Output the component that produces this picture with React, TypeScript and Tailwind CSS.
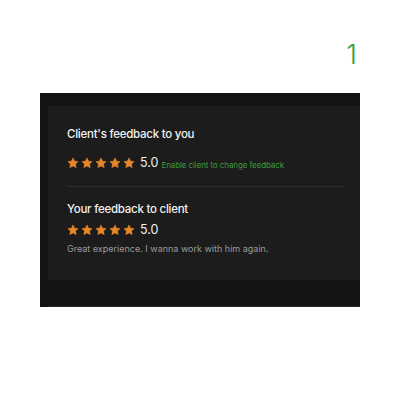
import React from 'react';

const Star = () => (
  <svg viewBox="0 0 24 24" className="w-[12px] h-[12px]" fill="#e8862c">
    <path d="M12 1.8l3.1 6.5 7.1.9-5.2 4.9 1.3 7.1L12 17.8l-6.3 3.4 1.3-7.1L1.8 9.2l7.1-.9z" stroke="#e8862c" strokeWidth="1.2" strokeLinejoin="round" />
  </svg>
);

const Stars = () => (
  <div className="flex items-center gap-[2px]">
    {[0, 1, 2, 3, 4].map((i) => (
      <Star key={i} />
    ))}
  </div>
);

const App = () => {
  return (
    <div className="w-[400px] h-[400px] bg-white" style={{ fontFamily: 'Inter, "Noto Sans", sans-serif' }}>
      {/* step number */}
      <div className="h-[93px] flex justify-end pr-[43px] pt-[41px]">
        <span className="text-[27px] leading-none font-light text-[#2f9a3f]">1</span>
      </div>

      {/* feedback panel */}
      <div className="ml-[40px] w-[320px] h-[214px] bg-[#141414] pt-[13px] pl-[8px] flex flex-col">
        <div className="h-[174px] bg-[#1c1c1c] pl-[19px] pr-[16px] pt-[21px]">
          <h3 className="text-[11.5px] leading-[15px] font-medium tracking-[-0.25px] text-[#f2f2f2]">Client's feedback to you</h3>
          <div className="mt-[13px] h-[16px] flex items-center">
            <Stars />
            <span className="ml-[5px] text-[12.5px] leading-[16px] text-[#f2f2f2]">5.0</span>
            <span className="ml-[3px] mt-[3px] text-[8px] leading-[10px] tracking-[-0.1px] text-[#3c9a3c]">Enable client to change feedback</span>
          </div>
          <div className="mt-[15px] h-px bg-[#2c2c2c]" />
          <h3 className="mt-[15px] text-[11.5px] leading-[15px] font-medium tracking-[-0.25px] text-[#f2f2f2]">Your feedback to client</h3>
          <div className="mt-[5px] h-[16px] flex items-center">
            <Stars />
            <span className="ml-[5px] text-[12.5px] leading-[16px] text-[#f2f2f2]">5.0</span>
          </div>
          <p className="mt-[4px] text-[9px] leading-[14px] text-[#9b9b9b]">Great experience. I wanna work with him again.</p>
        </div>
        <div className="flex-1 border-b border-[#262626]" />
      </div>
    </div>
  );
};

export default App;
